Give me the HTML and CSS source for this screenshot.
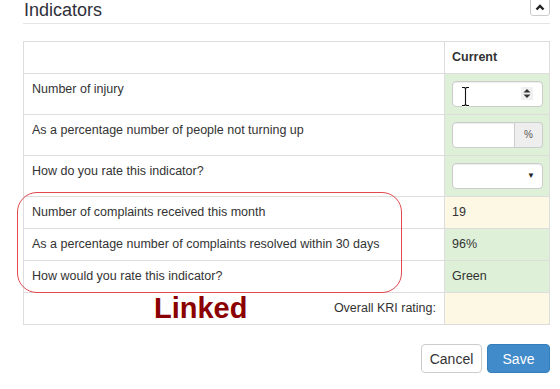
FILE: index.html
```html
<!DOCTYPE html>
<html lang="en">
<head>
    <meta charset="UTF-8">
    <title>Indicators</title>
    <link rel="stylesheet" href="styles.css">
</head>
<body>
    <div class="page">
        <div class="section-head">
            <h3 class="section-title">Indicators</h3>
            <button class="collapse-btn" type="button">
                <svg width="10" height="7" viewBox="0 0 10 7"><polyline points="1.5,5.5 5,2 8.5,5.5" fill="none" stroke="#222" stroke-width="2.4"/></svg>
            </button>
        </div>

        <table class="kri-table">
            <colgroup>
                <col>
                <col class="col-current">
            </colgroup>
            <thead>
                <tr>
                    <th></th>
                    <th class="val">Current</th>
                </tr>
            </thead>
            <tbody>
                <tr>
                    <td>Number of injury</td>
                    <td class="val green">
                        <div class="field num-field">
                            <span class="spinner">
                                <svg width="8" height="11" viewBox="0 0 8 11"><polygon points="4,1 7.5,4.5 0.5,4.5" fill="#333"/><polygon points="0.5,6.5 7.5,6.5 4,10" fill="#333"/></svg>
                            </span>
                        </div>
                    </td>
                </tr>
                <tr>
                    <td>As a percentage number of people not turning up</td>
                    <td class="val green">
                        <div class="input-group">
                            <div class="field group-field"></div>
                            <span class="addon">%</span>
                        </div>
                    </td>
                </tr>
                <tr>
                    <td>How do you rate this indicator?</td>
                    <td class="val green">
                        <div class="field select-field"><span class="caret">&#9660;</span></div>
                    </td>
                </tr>
                <tr>
                    <td>Number of complaints received this month</td>
                    <td class="val yellow">19</td>
                </tr>
                <tr>
                    <td>As a percentage number of complaints resolved within 30 days</td>
                    <td class="val green">96%</td>
                </tr>
                <tr>
                    <td>How would you rate this indicator?</td>
                    <td class="val green">Green</td>
                </tr>
                <tr>
                    <td class="total-label">Overall KRI rating:</td>
                    <td class="val yellow"></td>
                </tr>
            </tbody>
        </table>

        <div class="actions">
            <button class="btn btn-default" type="button">Cancel</button>
            <button class="btn btn-primary" type="button">Save</button>
        </div>

        <!-- annotation -->
        <div class="linked-outline"></div>
        <div class="linked-label">Linked</div>

        <!-- mouse cursor -->
        <svg class="ibeam" width="9" height="21" viewBox="0 0 9 21">
            <path d="M1,1.5 H3.5 L4.5,2.5 L5.5,1.5 H8 M4.5,2.5 V18.5 M1,19.5 H3.5 L4.5,18.5 L5.5,19.5 H8" fill="none" stroke="#fff" stroke-width="2.6"/>
            <path d="M1,1.5 H3.5 L4.5,2.5 L5.5,1.5 H8 M4.5,2.5 V18.5 M1,19.5 H3.5 L4.5,18.5 L5.5,19.5 H8" fill="none" stroke="#111" stroke-width="1.1"/>
        </svg>
    </div>
</body>
</html>
```

FILE: styles.css
```css
body {
    margin: 0;
    font-family: "Liberation Sans", Arial, sans-serif;
    color: #333;
    background-color: #fff;
}

.page {
    position: relative;
    padding: 0 10px 0 23px;
}

/* Заголовок секции */
.section-head {
    display: flex;
    justify-content: space-between;
    align-items: flex-start;
    height: 23px;
    border-bottom: 1px solid #e5e5e5;
    margin-bottom: 17px;
}

.section-title {
    margin: 0;
    padding-left: 1px;
    font-size: 18px;
    font-weight: normal;
    line-height: 21px;
    color: #2f2f3a;
}

.collapse-btn {
    margin-top: -4px;
    width: 20px;
    height: 20px;
    padding: 0;
    border: 1px solid #ccc;
    border-radius: 3px;
    background-color: #fff;
    display: flex;
    align-items: center;
    justify-content: center;
    padding-top: 3px;
}

/* Таблица */
.kri-table {
    width: 100%;
    border-collapse: collapse;
    table-layout: fixed;
    border: 1px solid #ddd;
    font-size: 12.5px;
}

.col-current {
    width: 105px;
}

.kri-table th,
.kri-table td {
    border: 1px solid #ddd;
    padding: 7px 8px;
    line-height: 17px;
    text-align: left;
    vertical-align: top;
}

.kri-table th {
    font-weight: bold;
    color: #333;
}

.kri-table .val {
    padding-left: 7px;
    padding-right: 6px;
}

.green {
    background-color: #dff0d8;
}

.yellow {
    background-color: #fcf8e3;
}

.kri-table .total-label {
    text-align: right;
}

/* Поля ввода */
.field {
    position: relative;
    box-sizing: border-box;
    height: 26px;
    border: 1px solid #ccc;
    border-radius: 4px;
    background-color: #fff;
    box-shadow: inset 0 1px 1px rgba(0, 0, 0, 0.075);
}

.num-field {
    width: 91px;
}

.spinner {
    position: absolute;
    right: 9px;
    top: 5px;
    width: 12px;
    height: 13px;
    background-color: #f0f0f0;
    display: flex;
    align-items: center;
    justify-content: center;
}

.input-group {
    display: flex;
    width: 91px;
}

.group-field {
    flex: 1;
    border-radius: 4px 0 0 4px;
}

.addon {
    box-sizing: border-box;
    width: 28px;
    height: 26px;
    border: 1px solid #ccc;
    border-left: none;
    border-radius: 0 4px 4px 0;
    background-color: #eee;
    color: #555;
    font-size: 10px;
    line-height: 24px;
    text-align: center;
}

.select-field {
    width: 91px;
}

.caret {
    position: absolute;
    right: 7px;
    top: 7px;
    font-size: 8px;
    line-height: 10px;
    color: #222;
}

/* Кнопки */
.actions {
    display: flex;
    justify-content: flex-end;
    gap: 5px;
    margin-top: 19px;
}

.btn {
    box-sizing: border-box;
    height: 29px;
    border: 1px solid #ccc;
    border-radius: 4px;
    font-family: "Liberation Sans", Arial, sans-serif;
    font-size: 14px;
    padding: 0;
}

.btn-default {
    width: 61px;
    background-color: #fff;
    color: #333;
}

.btn-primary {
    width: 63px;
    background-color: #428bca;
    border-color: #357ebd;
    color: #fff;
}

/* Пометка поверх таблицы */
.linked-outline {
    position: absolute;
    left: 17px;
    top: 192px;
    width: 383px;
    height: 99px;
    border: 1.5px solid #e2484d;
    border-radius: 20px;
}

.linked-label {
    position: absolute;
    left: 154px;
    top: 294px;
    font-size: 29px;
    line-height: 29px;
    font-weight: bold;
    color: #8b0000;
}

.ibeam {
    position: absolute;
    left: 461px;
    top: 86px;
}
```
